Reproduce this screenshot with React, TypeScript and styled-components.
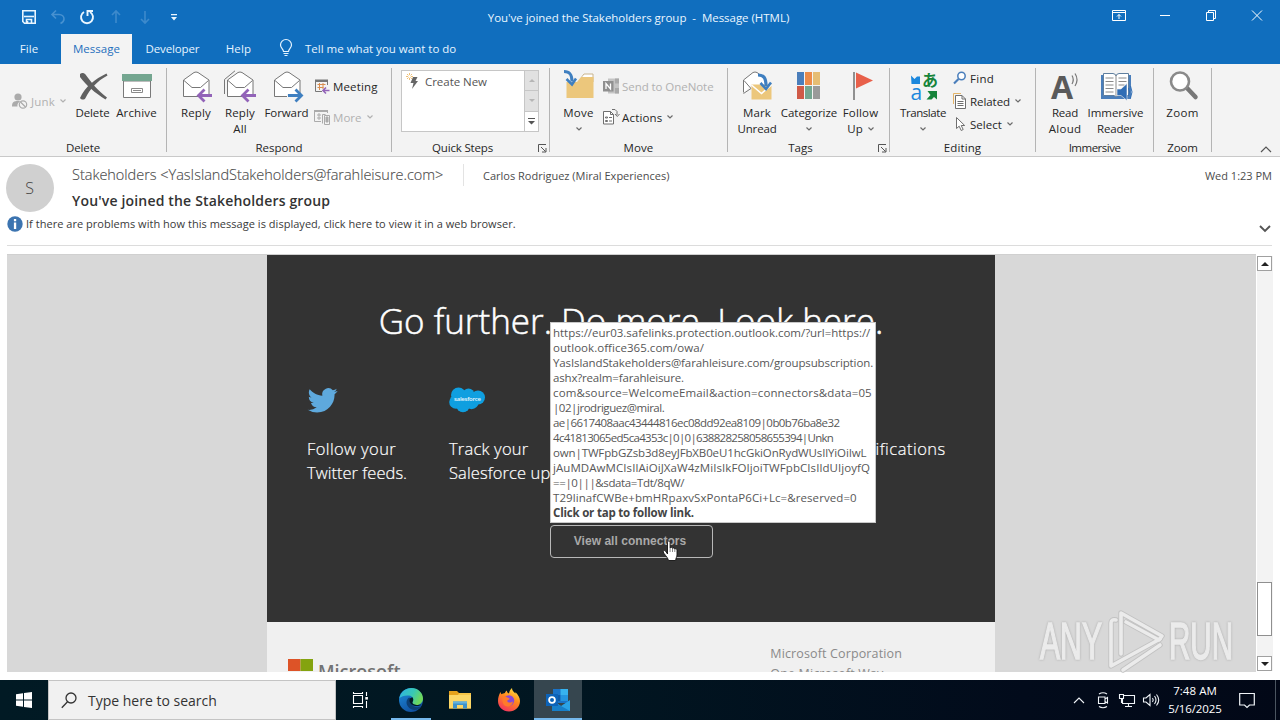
import { FC, ReactNode } from 'react';
import styled, { createGlobalStyle } from 'styled-components';

const GlobalStyle = createGlobalStyle`
  * {
    box-sizing: border-box;
  }
  body {
    margin: 0;
    overflow: hidden;
    font-family: 'Open Sans', 'Noto Sans', sans-serif;
    font-size: 11.5px;
    color: #262626;
  }
  svg {
    display: block;
    flex: none;
    overflow: visible;
  }
`;

const Window = styled.div`
  width: 1280px;
  height: 720px;
  display: flex;
  flex-direction: column;
  overflow: hidden;
  background: #fff;
`;

const Text = styled.span<{ $ls?: number }>`
  white-space: pre;
  letter-spacing: ${(p) => p.$ls ?? 0}px;
`;

/* title bar */

const TitleBar = styled.header`
  height: 34px;
  display: grid;
  grid-template-columns: 1fr auto 1fr;
  align-items: center;
  background: #106ebe;
  color: #eaf6ff;
`;

const QuickAccess = styled.div`
  display: flex;
  align-items: center;
  gap: 13px;
  padding-left: 21px;
`;

const WindowTitle = styled.div`
  padding-right: 3px;
`;

const WindowControls = styled.div`
  display: flex;
  justify-content: flex-end;
  padding-bottom: 4px;
`;

const ControlButton = styled.div`
  width: 46px;
  display: flex;
  align-items: center;
  justify-content: center;
`;

/* tabs */

const TabBar = styled.nav`
  height: 30px;
  display: flex;
  background: #106ebe;
  color: #e6f4ff;
`;

const Tab = styled.div<{ $width: number; $active?: boolean }>`
  width: ${(p) => p.$width}px;
  display: flex;
  align-items: center;
  justify-content: center;
  padding-bottom: 2px;
  background: ${(p) => (p.$active ? '#f3f3f3' : 'transparent')};
  color: ${(p) => (p.$active ? '#1f6fbd' : 'inherit')};
`;

const FileTab = styled(Tab)`
  margin-right: 3px;
`;

const TellMe = styled.div`
  display: flex;
  align-items: center;
  gap: 12px;
  margin-left: 15px;
  padding-bottom: 2px;
`;

/* ribbon */

const Ribbon = styled.section`
  height: 93px;
  display: flex;
  background: #f3f3f3;
  border-bottom: 1px solid #c9c9c9;
`;

const Group = styled.div<{ $width: number }>`
  width: ${(p) => p.$width}px;
  display: flex;
  flex-direction: column;
  border-right: 1px solid #b4b4b4;
  margin: 4px 0;
`;

const GroupBody = styled.div<{ $left: number }>`
  height: 74px;
  flex: none;
  display: flex;
  padding-left: ${(p) => p.$left}px;
`;

const GroupFooter = styled.div<{ $launcher?: boolean }>`
  height: 10px;
  display: flex;
  align-items: center;
  justify-content: center;
  padding-left: ${(p) => (p.$launcher ? 1 : 0)}px;

  svg {
    margin: 3px 2px 0 0;
  }
`;

const FooterLabel = styled(Text)<{ $launcher?: boolean }>`
  flex: ${(p) => (p.$launcher ? 1 : 'none')};
  padding-right: ${(p) => (p.$launcher ? 6 : 0)}px;
  text-align: center;
`;

const BigButton = styled.div<{ $width: number }>`
  width: ${(p) => p.$width}px;
  display: flex;
  flex-direction: column;
  align-items: center;
  padding-top: 2px;
  line-height: 16px;
`;

const IconSlot = styled.div`
  height: 35px;
`;

const ChevronLine = styled.div`
  height: 16px;
  display: flex;
  align-items: center;
  gap: 5px;
`;

const SmallColumn = styled.div<{ $left?: number; $dense?: boolean }>`
  display: flex;
  flex-direction: column;
  gap: ${(p) => (p.$dense ? 7 : 15)}px;
  margin-left: ${(p) => p.$left ?? 0}px;
  padding-top: ${(p) => (p.$dense ? 2 : 10)}px;
`;

const SmallButton = styled.div<{ $disabled?: boolean; $gap?: number }>`
  height: 16px;
  display: flex;
  align-items: center;
  gap: ${(p) => p.$gap ?? 3}px;
  color: ${(p) => (p.$disabled ? '#b1b1b1' : 'inherit')};

  svg:last-child {
    margin-left: 2px;
  }
`;

const JunkSlot = styled.div`
  width: 58px;
  padding-top: 25px;
`;

const QuickStepsBox = styled.div`
  width: 138px;
  height: 62px;
  margin-top: 2px;
  display: flex;
  background: #fff;
  border: 1px solid #c6c6c6;
`;

const QuickStep = styled.div`
  flex: 1;
  height: 21px;
  display: flex;
  align-items: center;
  gap: 5px;
  padding-left: 4px;
  color: #555;
`;

const Spinner = styled.div`
  width: 14px;
  display: flex;
  flex-direction: column;
`;

const SpinnerCell = styled.div<{ $last?: boolean }>`
  flex: 1;
  display: flex;
  align-items: center;
  justify-content: center;
  background: ${(p) => (p.$last ? '#fff' : '#e1e1e1')};
  border-left: 1px solid #c6c6c6;
  border-bottom: ${(p) => (p.$last ? 'none' : '1px solid #c6c6c6')};
`;

const CollapseRibbon = styled.div`
  margin: auto 8px 3px auto;
`;

/* message header */

const MessageHeader = styled.section`
  height: 89px;
  padding: 7px 8px 0 6px;
`;

const SenderRow = styled.div`
  height: 48px;
  display: flex;
`;

const Avatar = styled.div`
  width: 48px;
  height: 48px;
  display: flex;
  align-items: center;
  justify-content: center;
  padding-right: 1px;
  border-radius: 50%;
  background: #d0d0d0;
  color: #444;
  font-size: 16px;
  font-weight: 300;
`;

const SenderInfo = styled.div`
  flex: 1;
  margin-left: 18px;
`;

const SenderLine = styled.div`
  height: 22px;
  display: flex;
  align-items: center;
  font-size: 11px;
  color: #4c4c4c;
`;

const SenderAddress = styled(Text)`
  width: 391px;
  font-size: 14.5px;
  font-weight: 300;
  margin-top: -2px;
  -webkit-text-stroke: 0.15px #4c4c4c;
`;

const Recipient = styled.div`
  flex: 1;
  height: 22px;
  display: flex;
  align-items: center;
  padding-left: 19px;
  border-left: 1px solid #e3e3e3;
`;

const Subject = styled.div`
  padding-top: 2px;
  font-size: 14px;
  font-weight: 600;
  line-height: 26px;
  color: #333;
`;

const InfoBar = styled.div`
  height: 34px;
  display: flex;
  align-items: center;
  gap: 3px;
  padding: 0 1px 9px 0;
  margin-left: 1px;
  border-bottom: 1px solid #dcdcdc;
  font-size: 11px;
  color: #3a3a3a;

  span {
    margin-top: -2px;
  }
  svg:last-child {
    margin: 10px 0 0 auto;
  }
`;

/* reading pane */

const ReadingPane = styled.main`
  height: 434px;
  display: flex;
  margin: 0 7px;
  padding: 8px 0;
  position: relative;
`;

const MailCanvas = styled.div`
  width: 1249px;
  height: 418px;
  padding-left: 260px;
  background: #d8d8d8;
  border-top: 1px solid #d0d0d0;
  overflow: hidden;
`;

const MailBody = styled.div`
  width: 728px;
  height: 367px;
  display: flex;
  flex-direction: column;
  align-items: center;
  background: #333;
  color: #fff;
`;

const Headline = styled.h1`
  margin: 41px 0 0;
  font-size: 35px;
  font-weight: 300;
  line-height: 50px;
  -webkit-text-stroke: 0.5px #fff;
`;

const Features = styled.div`
  align-self: stretch;
  height: 179px;
  display: grid;
  grid-template-columns: 142px 400px 1fr;
  padding: 39px 0 0 40px;
`;

const Feature = styled.div`
  font-size: 16.5px;
  font-weight: 300;
  line-height: 24px;
  white-space: pre;
  -webkit-text-stroke: 0.2px #fff;
`;

const FeatureIcon = styled.div`
  height: 52px;
  padding-top: 2px;
`;

const ConnectorsButton = styled.div`
  width: 163px;
  height: 33px;
  padding: 0 2px 2px 0;
  display: flex;
  align-items: center;
  justify-content: center;
  border: 1px solid #b8b8b8;
  border-radius: 4px;
  color: #a9a9a9;
  font: bold 12px 'Liberation Sans', Arial, sans-serif;
`;

const MailFooter = styled.div`
  width: 728px;
  height: 60px;
  display: flex;
  justify-content: space-between;
  padding: 22px 93px 0 21px;
  background: #f0f0f0;
  color: #8a8a8a;
`;

const Brand = styled.div`
  display: flex;
  gap: 5px;
  padding-top: 15px;
  color: #737373;
  font-size: 18px;
  font-weight: 600;
  line-height: 24px;
`;

const Address = styled.div`
  font-size: 12.5px;
  line-height: 20px;
`;

const LinkTip = styled.div`
  position: absolute;
  left: 543px;
  top: 76px;
  width: 326px;
  height: 201px;
  padding: 2px 0 0 2px;
  display: flex;
  flex-direction: column;
  background: #fff;
  border: 1px solid #c8c8c8;
  color: #575757;
  line-height: 15px;

  strong {
    color: #444;
  }
`;

const Pointer = styled.div`
  position: absolute;
  left: 655px;
  top: 294px;
`;

const Watermark = styled.div`
  position: absolute;
  left: 1028px;
  top: 362px;
`;

const ScrollBar = styled.div`
  width: 16px;
  display: flex;
  flex-direction: column;
  margin: 2px 0 1px 1px;
  background: #f3f3f3;
`;

const ScrollArrow = styled.div`
  height: 15px;
  width: 15px;
  display: flex;
  align-items: center;
  justify-content: center;
  background: #fff;
  border: 1px solid #a0a0a0;
`;

const ScrollTrack = styled.div`
  flex: 1;
  padding-top: 311px;
`;

const ScrollThumb = styled.div`
  width: 15px;
  height: 54px;
  background: #fff;
  border: 1px solid #8f8f8f;
`;

/* taskbar */

const TaskBar = styled.footer`
  height: 40px;
  display: flex;
  align-items: center;
  background: linear-gradient(90deg, #011a24 0%, #011621 45%, #020b1b 80%, #020817 100%);
  color: #fff;
`;

const StartButton = styled.div`
  width: 48px;
  padding-left: 16px;
`;

const SearchBox = styled.div`
  width: 288px;
  height: 40px;
  display: flex;
  align-items: center;
  gap: 11px;
  padding-left: 12px;
  background: #f1f1f1;
  border: 1px solid #c4c4c4;
  color: #333;
  font-size: 14px;
`;

const TaskButtons = styled.div`
  display: flex;
  gap: 1px;
`;

const TaskButton = styled.div<{ $open?: boolean; $active?: boolean }>`
  width: 48px;
  height: 40px;
  display: flex;
  align-items: center;
  justify-content: center;
  background: ${(p) => (p.$active ? '#36464f' : 'transparent')};
  box-shadow: ${(p) => (p.$active ? 'inset 0 -2px #76b9ed' : 'none')};
  ${(p) => p.$open && 'background: linear-gradient(#76b9ed, #76b9ed) bottom / 40px 2px no-repeat;'}

  &:first-child {
    margin-right: 2px;
  }
`;

const Tray = styled.div`
  height: 40px;
  display: flex;
  align-items: center;
  margin-left: auto;
`;

const TrayIcon = styled.div`
  width: 24px;
  display: flex;
  justify-content: center;
`;

const Clock = styled.div`
  width: 64px;
  display: flex;
  flex-direction: column;
  align-items: center;
  line-height: 18px;
`;

const Notifications = styled.div`
  width: 49px;
  height: 40px;
  display: flex;
  align-items: center;
  padding-left: 12px;
  border-right: 1px solid #4b5560;
  margin-right: 4px;
`;

/* icons */

const Chevron: FC<{ color?: string }> = ({ color = '#6b6b6b' }) => (
  <svg width='6' height='4' viewBox='0 0 6 4'>
    <path d='M.5 .5 3 3 5.500 .5' fill='none' stroke={color} strokeWidth='1.200' />
  </svg>
);

const Triangle: FC<{ up?: boolean; color?: string; size?: number }> = ({ up, color = '#222', size = 8 }) => (
  <svg width={size} height={size / 2} viewBox='0 0 8 4'>
    <path d={up ? 'M0 4 4 0 8 4z' : 'M0 0 4 4 8 0z'} fill={color} />
  </svg>
);

const Launcher = () => (
  <svg width='9' height='9' viewBox='0 0 9 9' fill='none' stroke='#555'>
    <path d='M.5 8V.5H8M3 3l4.500 4.500M8 4v4H4' />
  </svg>
);

const SaveIcon = () => (
  <svg width='16' height='16' viewBox='0 0 16 16' fill='none' stroke='#eaf6ff' strokeWidth='1.600'>
    <path d='M1.800 1.800h12.400v12.400H3.500L1.800 12.500z' />
    <path d='M3 7.500h10' />
    <path d='M5.500 14.500v-4h5v4' />
    <path d='M6.500 12v2' />
  </svg>
);

const UndoIcon = () => (
  <svg width='16' height='16' viewBox='0 0 16 16' fill='none' stroke='#4791d0' strokeWidth='1.600'>
    <path d='M6 1.500 2 5.500l4 4M2 5.500h7c3 0 5 2 5 4.500s-1.500 3.500-3.500 4.500' />
  </svg>
);

const RepeatIcon = () => (
  <svg width='16' height='16' viewBox='0 0 16 16' fill='none' stroke='#eaf6ff' strokeWidth='1.900'>
    <path d='M5 3A6 6 0 1 0 11 3' />
    <path d='M8.500 7V2H14' />
  </svg>
);

const ArrowIcon: FC<{ down?: boolean }> = ({ down }) => (
  <svg width='16' height='16' viewBox='0 0 16 16' fill='none' stroke='#3d8acc' strokeWidth='1.600'>
    <path d={down ? 'M8 2v12M4 10l4 4 4-4' : 'M8 14V2M4 6l4-4 4 4'} />
  </svg>
);

const CustomizeIcon = () => (
  <svg width='16' height='16' viewBox='0 0 16 16' fill='#eaf6ff'>
    <path d='M5 5h6v1.300H5zM5 8h6l-3 3.500z' />
  </svg>
);

const BulbIcon = () => (
  <svg width='14' height='18' viewBox='0 0 14 18' fill='none' stroke='#e6f4ff' strokeWidth='1.200'>
    <path d='M4.500 12.500C4.500 10 1.500 9 1.500 6a5.500 5.500 0 0 1 11 0c0 3-3 4-3 6.500zM4.500 14.500h5M5.500 16.500h3' />
  </svg>
);

const RibbonDisplayIcon = () => (
  <svg width='14' height='11' viewBox='0 0 14 11' fill='none' stroke='#fff'>
    <path d='M.5 .5h13v10H.5zM.5 2.500h13M7 9V4.500M5 6.500l2-2 2 2' />
  </svg>
);

const JunkIcon = () => (
  <svg width='16' height='16' viewBox='0 0 16 16'>
    <circle cx='6' cy='4' r='3.600' fill='#ababab' />
    <path d='M0 13c0-4 2-5 6-5 1 0 2 0 2 .5-2 1-3 3-2.500 5H0z' fill='#ababab' />
    <circle cx='11' cy='11.500' r='3.700' fill='#f3f3f3' stroke='#ababab' strokeWidth='1.200' />
    <path d='m8.500 9 5 5' stroke='#ababab' strokeWidth='1.200' />
  </svg>
);

const DeleteIcon = () => (
  <svg width='32' height='32' viewBox='0 0 32 32' fill='#606060'>
    <path d='M3 4c2-1.500 4-1 5.500 .5 6 8 12 16 21.500 23L28.500 29.500C18 23 9 15 3 7z' />
    <path d='M29.500 3.500 30.500 5.500C20 11 13 19 8.500 28c-1 2-4 2-5.500 0C8 17 18 9 29.500 3.500z' />
  </svg>
);

const ArchiveIcon = () => (
  <svg width='32' height='32' viewBox='0 0 32 32'>
    <path d='M2.500 11h27v16.500h-27z' fill='#fff' stroke='#7a7a7a' />
    <path d='M1 4h30v7H1z' fill='#74a690' />
    <path d='M10.500 18.500h11v4h-11zM12 20.500h8' fill='#fff' stroke='#8a8a8a' />
  </svg>
);

const EnvelopeIcon: FC<{ kind: 'reply' | 'replyAll' | 'forward' }> = ({ kind }) => (
  <svg width='32' height='34' viewBox='0 0 32 34' fill='none'>
    {kind === 'replyAll' && <path d='M.5 24V9.500L11 .8' stroke='#777' />}
    <path d='M3.500 26.500V10L14 2.500q2-1 4 0L29 10v16.500z' fill='#fff' stroke='#777' />
    <path d='m4 10.500 8 7h8.500l8-7' stroke='#777' />
    {kind === 'forward' ? (
      <g>
        <path d='M16 24h13.500v6H16z' fill='#f3f3f3' />
        <path d='M17 25.500h13M24.500 19.500l6 6-6 6' stroke='#3f7fc0' strokeWidth='2.800' />
      </g>
    ) : (
      <g>
        <path d='M20 24h12v6H20z' fill='#f3f3f3' />
        <path d='M32 25.500H19M24.500 19.500l-6 6 6 6' stroke='#9263b8' strokeWidth='2.800' />
      </g>
    )}
  </svg>
);

const MeetingIcon = () => (
  <svg width='16' height='16' viewBox='0 0 16 16' fill='none'>
    <path d='M1.500 3v10.500H8M13.500 3v4' stroke='#777' />
    <path d='M1 1.500h13V4H1z' fill='#777' />
    <path d='M3.500 6.500h8M3.500 9.500h6M5.500 5v7M9 5v6' stroke='#d98e50' />
    <path d='M15.500 12.500H9.500M12 9.500l-3 3 3 3' stroke='#9263b8' strokeWidth='1.600' />
  </svg>
);

const MoreIcon = () => (
  <svg width='16' height='16' viewBox='0 0 16 16' fill='none' stroke='#ababab'>
    <path d='M.5 2v10.500H7M13.500 2v2' />
    <path d='M0 2h14' strokeWidth='2' />
    <path d='M3 6h4M3 9h4M5 4v7M8.500 14.500v-9h3M10.500 6.500h5v9h-5z' />
    <path d='M12 8h2v5h-2z' fill='#ababab' />
  </svg>
);

const BoltIcon = () => (
  <svg width='14' height='18' viewBox='0 0 14 18'>
    <path d='M3.500 0v7M0 3.500h7M1 1l5 5M6 1 1 6' stroke='#edb968' strokeWidth='.9' />
    <circle cx='3.500' cy='3.500' r='1.400' fill='#fff' />
    <path d='M7 4h4.500L9.500 8H12l-6 8 1.500-6H4.500z' fill='#666' />
  </svg>
);

const MoveIcon = () => (
  <svg width='32' height='32' viewBox='0 0 32 32'>
    <path d='M19 6.500 21 4h9v8h-11z' fill='#fff' stroke='#c9b48c' />
    <path d='M3.500 28V12H14l4-5h12.500v21z' fill='#ecc77c' />
    <path d='M1 1.500c6 0 8 3 8 10' fill='none' stroke='#3f7fc0' strokeWidth='3' />
    <path d='m3.500 9 5.500 5.500 4-6' fill='none' stroke='#3f7fc0' strokeWidth='2.500' />
  </svg>
);

const OneNoteIcon = () => (
  <svg width='16' height='16' viewBox='0 0 16 16'>
    <path d='M5 .5h11v15H5z' fill='#c4c4c4' />
    <path d='M12 .5h4v5h-4zM12 10h4v5.500h-4z' fill='#a9a9a9' />
    <path d='M0 3h10.500v10.500H0z' fill='#8f8f8f' />
    <path d='M3 11V5.500l4.500 5.500V5.500' fill='none' stroke='#fff' strokeWidth='1.300' />
  </svg>
);

const ActionsIcon = () => (
  <svg width='17' height='16' viewBox='0 0 17 16' fill='none' stroke='#6f6f6f'>
    <path d='M.5 2.500h7l3 3v9.500H.5z' fill='#fff' />
    <path d='M7.500 2.500v3h3' />
    <path d='M2.500 8h2v1h-2zM6 8.500h3M2.500 11.500h2v1h-2zM6 12h3' />
    <path d='M9 .5h3l2 2v3.500M12 5l2.300 2.500L16.500 5' />
  </svg>
);

const MarkUnreadIcon = () => (
  <svg width='32' height='32' viewBox='0 0 32 32' fill='none'>
    <path d='M2.500 22V10L12 2.500q2-1 4 0L25 10v5H10l-7.500 8z' fill='#fff' />
    <path d='M2.500 22.500V10L12 2.500q2-1 4 0l6 4.500M3 10.500l7 8-7.500 5' stroke='#777' />
    <path d='M10.500 14.500h20v15h-20z' fill='#ecc77c' />
    <path d='m10.500 15 10 8.500 10-8.500' stroke='#fff' strokeWidth='1.600' />
    <path d='M17 5c6 0 8 3 8 11' stroke='#3f7fc0' strokeWidth='3.200' />
    <path d='m19.500 13 5.500 6 5-6.500' stroke='#3f7fc0' strokeWidth='2.600' />
  </svg>
);

const CategorizeIcon = () => (
  <svg width='32' height='32' viewBox='0 0 32 32'>
    <path d='M4 2h7v13H4z' fill='#4a7ebb' />
    <path d='M12 2h7v13h-7z' fill='#ec8b49' />
    <path d='M20 2h7v13h-7z' fill='#e6bd73' />
    <path d='M4 16h7v13H4z' fill='#cf5a47' />
    <path d='M12 16h7v13h-7z' fill='#74a690' />
    <path d='M20 16h7v13h-7z' fill='#9a9a9a' />
  </svg>
);

const FlagIcon = () => (
  <svg width='32' height='32' viewBox='0 0 32 32'>
    <path d='M9 2v28' stroke='#777' strokeWidth='1.600' />
    <path d='M11 2.500 28 10.500l-17 8z' fill='#e8604a' />
  </svg>
);

const TranslateIcon = () => (
  <svg width='32' height='32' viewBox='0 0 32 32'>
    <path d='M4 5.500 7.500 9 10 6.500h3V14H4.500z' fill='#1b87dd' />
    <path d='M20.500 21H30v8.500l-3-2.500-2.500 2.500h-5l4-4.500z' fill='#16843a' />
    <text x='15' y='15.500' fontSize='16' fontWeight='700' fontFamily='"Noto Sans CJK JP", sans-serif' fill='#16843a'>
      あ
    </text>
    <text x='3.500' y='29.500' fontSize='21' fontFamily='"Open Sans", sans-serif' fill='#1b87dd'>
      a
    </text>
  </svg>
);

const FindIcon = () => (
  <svg width='14' height='14' viewBox='0 0 14 14' fill='none' stroke='#4a7ebb'>
    <circle cx='8.500' cy='5' r='3.700' fill='#fff' strokeWidth='1.500' />
    <path d='M5.500 8 1 12.500' strokeWidth='2.200' />
  </svg>
);

const RelatedIcon = () => (
  <svg width='14' height='16' viewBox='0 0 14 16' fill='none'>
    <path d='M.5 11V.5H8' stroke='#e4b468' />
    <path d='M2.500 2.500h6.500l3.500 3.500v9.500h-10z' fill='#fff' stroke='#6f6f6f' />
    <path d='M9 2.500V6h3.500M4.500 8.500h6M4.500 10.500h6M4.500 12.500h6' stroke='#6f6f6f' />
  </svg>
);

const SelectIcon = () => (
  <svg width='14' height='16' viewBox='0 0 14 16'>
    <path d='M3.500 1.500v11l2.700-2.300 2 4.300 2-1-2-4h3.500z' fill='#fff' stroke='#6f6f6f' />
  </svg>
);

const ReadAloudIcon = () => (
  <svg width='32' height='32' viewBox='0 0 32 32' fill='none'>
    <text x='2' y='29' fontSize='32' fontWeight='700' fontFamily='"Open Sans", sans-serif' fill='#5a5a5a'>
      A
    </text>
    <path d='M23 5.500q2.500 4 0 8.500M26 3.500q4 6 0 12.500' stroke='#777' strokeWidth='1.200' />
  </svg>
);

const ReaderIcon = () => (
  <svg width='32' height='32' viewBox='0 0 32 32' fill='none'>
    <path d='M1 5h30v24H1z' fill='#4a7ebb' />
    <path d='M3.500 3.500h9.500q3 .5 3 2.500 0-2 3-2.500h9.500v22H18l-2 1.500-2-1.500H3.500z' fill='#fff' stroke='#5f7f9f' />
    <path d='M16 5v21M5.500 8h8M5.500 11.500h8M5.500 15h8M5.500 18.500h8M5.500 22h8M18.500 8h8M18.500 11.500h8M18.500 15h6' stroke='#8a8a8a' />
    <path d='M17 19h4l6-5.500v17L21 25.500h-4z' fill='#2f6db5' stroke='#f3f3f3' strokeWidth='.6' />
    <path d='M28.500 18q2 4 0 8M30.500 16q3 6 0 12' stroke='#2f6db5' />
  </svg>
);

const ZoomIcon = () => (
  <svg width='32' height='32' viewBox='0 0 32 32' fill='none'>
    <path d='m20 18 8.500 9' stroke='#777' strokeWidth='4.500' strokeLinecap='round' />
    <circle cx='13' cy='11.500' r='9' fill='#fff' stroke='#8a8a8a' strokeWidth='2.600' />
  </svg>
);

const InfoIcon = () => (
  <svg width='16' height='16' viewBox='0 0 16 16'>
    <circle cx='8' cy='8' r='7.700' fill='#3c74b0' />
    <path d='M6.900 6.500h2.300V13H6.900zM6.900 3h2.300v2.200H6.900z' fill='#fff' />
  </svg>
);

const TwitterIcon = () => (
  <svg width='30' height='28' viewBox='-.5 1.500 24 22'>
    <path
      fill='#5ea9dd'
      d='M23.950 4.570a10 10 0 0 1-2.820.77 4.960 4.960 0 0 0 2.160-2.720c-.95.55-2 .95-3.130 1.180a4.920 4.920 0 0 0-8.380 4.480C7.690 8.100 4.070 6.130 1.640 3.160a4.820 4.820 0 0 0-.67 2.480c0 1.710.87 3.210 2.190 4.100a4.900 4.900 0 0 1-2.230-.62v.06a4.920 4.920 0 0 0 3.950 4.830 5 5 0 0 1-2.210.08 4.940 4.940 0 0 0 4.600 3.420A9.870 9.870 0 0 1 0 19.540a13.990 13.990 0 0 0 7.560 2.210c9.050 0 14-7.500 14-13.980 0-.21 0-.42-.02-.63a9.940 9.940 0 0 0 2.460-2.550z'
    />
  </svg>
);

const SalesforceIcon = () => (
  <svg width='36' height='26' viewBox='0 0 36 26'>
    <g fill='#0f9fe0'>
      <circle cx='9.500' cy='8' r='7.500' />
      <circle cx='7' cy='15' r='6.800' />
      <circle cx='14' cy='18.500' r='6.800' />
      <circle cx='19.500' cy='7.500' r='6' />
      <circle cx='22.500' cy='15' r='7.200' />
      <circle cx='29' cy='10.500' r='7' />
    </g>
    <text
      x='5'
      y='14'
      fontSize='6'
      fontWeight='600'
      textLength='27'
      stroke='none'
      fontFamily='"Open Sans", sans-serif'
      fill='#e8f7ff'
    >
      salesforce
    </text>
  </svg>
);

const HandIcon = () => (
  <svg width='17' height='22' viewBox='0 0 17 22'>
    <path
      d='M5.500 14V2.200c0-1.800 2.600-1.800 2.600 0V8c.5-1 2.300-.8 2.400.4.600-.8 2.200-.5 2.300.7.700-.7 2.200-.3 2.200 1V15c0 2-1.300 3-1.300 5.500H6.500C6 17.500 1.500 13.500 1.200 12c-.3-1.400 1.300-2 2.300-1z'
      fill='#fff'
      stroke='#111'
      strokeWidth='.9'
    />
    <path d='M8.100 8v4M10.500 8.500V12M12.800 9.200V12' stroke='#555' strokeWidth='.7' />
  </svg>
);

const MicrosoftMark = () => (
  <svg width='25' height='25' viewBox='0 0 25 25'>
    <path d='M0 0h12.500v12H0z' fill='#dd5327' />
    <path d='M12.500 0H25v12H12.500z' fill='#84a30f' />
    <path d='M0 13h12v12H0z' fill='#1ba1e2' />
    <path d='M13 13h12v12H13z' fill='#f3b61b' />
  </svg>
);

const AnyRunLogo = () => (
  <svg width='206' height='66' viewBox='0 0 206 66' fill='none'>
    <g
      fontFamily='"Liberation Sans Narrow", "Liberation Sans", sans-serif'
      fontSize='52'
      fill='#ebebeb'
      stroke='#ebebeb'
      strokeWidth='1.600'
      filter='drop-shadow(0 0 1px #aaa)'
    >
      <text x='5' y='51' textLength='62' lengthAdjust='spacingAndGlyphs'>
        ANY
      </text>
      <text x='134' y='51' textLength='64' lengthAdjust='spacingAndGlyphs'>
        RUN
      </text>
    </g>
    {['#c2c2c2', '#ebebeb'].map((color, i) => (
      <g key={color} stroke={color} strokeWidth={i ? 3.600 : 5.400} strokeLinecap='round' strokeLinejoin='round'>
        <path d='M81 12q-5-1-5 3v43l49-27' />
        <path d='M86 46V5l41 23-3 4L91 14' />
        <path d='m88 62 37-25' />
      </g>
    ))}
  </svg>
);

const WindowsIcon = () => (
  <svg width='16' height='16' viewBox='0 0 16 16' fill='#fff'>
    <path d='M0 2.300 7 1.300v6.200H0zM8 1.100 16 0v7.500H8zM0 8.500h7v6.200l-7-1zM8 8.500h8V16l-8-1.100z' />
  </svg>
);

const SearchIcon = () => (
  <svg width='16' height='17' viewBox='0 0 16 17' fill='none' stroke='#333' strokeWidth='1.300'>
    <circle cx='10' cy='6' r='5' />
    <path d='M6.500 9.700.8 15.800' />
  </svg>
);

const TaskViewIcon = () => (
  <svg width='18' height='16' viewBox='0 0 18 16' fill='none' stroke='#fff' strokeWidth='1.100'>
    <path d='M2.500 3.500h9v8h-9zM2.500 0v1.500h9V0M2.500 16v-1.500h9V16M15.500 0v4M15.500 9v7' />
    <path d='M14.300 5h2.600v2.600h-2.600z' fill='#fff' stroke='none' />
  </svg>
);

const EdgeIcon = () => (
  <svg width='24' height='24' viewBox='0 0 24 24'>
    <defs>
      <linearGradient id='edgeTop' x1='0' y1='0' x2='1' y2='.4'>
        <stop offset='0' stopColor='#2fb2e6' />
        <stop offset='.6' stopColor='#38c8b4' />
        <stop offset='1' stopColor='#6fd85a' />
      </linearGradient>
      <linearGradient id='edgeSide' x1='0' y1='0' x2='.6' y2='1'>
        <stop offset='0' stopColor='#1e8fdc' />
        <stop offset='1' stopColor='#104f9f' />
      </linearGradient>
    </defs>
    <circle cx='12' cy='12' r='12' fill='url(#edgeSide)' />
    <path
      d='M.3 10C2 3.500 7 0 12.500 0 19 0 24 5 24 10.500c0 4-3 6.500-6.500 6.500-3 0-5-1.200-4-3 1.500-2.500.5-6-3.500-6.500C6 7 2 8.500.3 10z'
      fill='url(#edgeTop)'
    />
    <path d='M10 9.500c-4 3-3 9 2 11.500 4 2 8 .5 10-2.500-4 1.500-8.500.500-9.500-3-.7-2 1-3-.2-5z' fill='#0d3f73' />
    <path
      d='M13.500 14c1-1.500 1-3 .2-4.500-1.200 0-3 .6-3.200 2.500-.2 2.500 1.500 4.500 4 5.500 3 1 6.500.5 8-1-3 1-10 .500-9-2.500z'
      fill='#011a24'
    />
  </svg>
);

const ExplorerIcon = () => (
  <svg width='22' height='20' viewBox='0 0 22 20'>
    <path d='M0 1h8l2 2h12v15.500H0z' fill='#e5a21c' />
    <path d='M0 5h22v13.500H0z' fill='#fcd766' />
    <path d='M10 3h12v2H9z' fill='#f6c547' />
    <path d='M4 18.500V11.500h14v7h-4v-3.500H8v3.500z' fill='#3f93c9' />
    <path d='M4 11.500h14v2H4z' fill='#64b2dd' />
  </svg>
);

const FirefoxIcon = () => (
  <svg width='24' height='24' viewBox='0 0 24 24'>
    <defs>
      <linearGradient id='fox' x1='.8' y1='0' x2='.3' y2='1'>
        <stop offset='0' stopColor='#ffe645' />
        <stop offset='.45' stopColor='#ff8a1d' />
        <stop offset='1' stopColor='#f4335f' />
      </linearGradient>
    </defs>
    <path
      d='M3.500 4c.2 1 .5 1.700 1 2.300C5.500 5.500 7 5.500 8 5c.2-1 1-2 2-2.500-.2 1.500.5 2.500 2 3 .3-2 1.200-4 3-5.500 0 2.500 1.500 3.500 3.500 5.500 0-.5 0-1-.2-1.500C21 6.500 23 9.500 23 13c0 6-5 10.500-11 10.500S1 19 1 13c0-3.500 1-6.500 2.500-9z'
      fill='url(#fox)'
    />
    <circle cx='12' cy='12.500' r='5.200' fill='#8748d8' />
    <path
      d='M5.500 9c2-1 4-.5 6 1 1.500 0 1.500 1.500-.5 2-1 .3-1 2 1 2.500 1.500.3 3-.5 4-1-.5 3-2.500 5-5.500 5s-5-3-5-5.500z'
      fill='#ff7a2a'
    />
  </svg>
);

const OutlookIcon = () => (
  <svg width='24' height='24' viewBox='0 0 24 24'>
    <path d='M7 1h15v14H7z' fill='#1a73c8' />
    <path d='M14.500 1H22v6h-7.500z' fill='#37b3ef' />
    <path d='M7 7h7.500v6H7z' fill='#0f5aa7' />
    <path d='M14.500 7H22v6h-7.500z' fill='#2495e0' />
    <path d='M6 12l9 6 9-6v11H6z' fill='#2aa3e6' />
    <path d='M6 13v10h18z' fill='#177fc9' />
    <path d='M0 6h12v12H0z' fill='#0d63b8' />
    <circle cx='6' cy='12' r='2.900' fill='none' stroke='#fff' strokeWidth='1.800' />
  </svg>
);

const TrayGlyph: FC<{ children: ReactNode }> = ({ children }) => (
  <svg width='18' height='18' viewBox='0 0 18 18' fill='none' stroke='#f0f4f8' strokeWidth='1.100'>
    {children}
  </svg>
);

const GroupLabel: FC<{ label: string; ls: number; launcher?: boolean }> = ({ label, ls, launcher }) => (
  <GroupFooter $launcher={launcher}>
    <FooterLabel $ls={ls} $launcher={launcher}>
      {label}
    </FooterLabel>
    {launcher && <Launcher />}
  </GroupFooter>
);

type Line = [string, number];

const Big: FC<{ icon: ReactNode; width: number; lines: Line[]; below?: boolean }> = ({ icon, width, lines, below }) => (
  <BigButton $width={width}>
    <IconSlot>{icon}</IconSlot>
    {lines.map(([text, ls]) => (
      <Text key={text} $ls={ls}>
        {text}
      </Text>
    ))}
    {below && (
      <ChevronLine>
        <Chevron />
      </ChevronLine>
    )}
  </BigButton>
);

const tipLines: Line[] = [
  ['https://eur03.safelinks.protection.outlook.com/?url=https://', -0.02],
  ['outlook.office365.com/owa/', 0.04],
  ['YasIslandStakeholders@farahleisure.com/groupsubscription.', -0.11],
  ['ashx?realm=farahleisure.', -0.17],
  ['com&source=WelcomeEmail&action=connectors&data=05', 0.13],
  ['|02|jrodriguez@miral.', -0.46],
  ['ae|6617408aac43444816ec08dd92ea8109|0b0b76ba8e32', -0.57],
  ['4c41813065ed5ca4353c|0|0|638828258058655394|Unkn', -0.7],
  ['own|TWFpbGZsb3d8eyJFbXB0eU1hcGkiOnRydWUsIlYiOiIwL', -0.13],
  ['jAuMDAwMCIsIlAiOiJXaW4zMiIsIkFOIjoiTWFpbCIsIldUIjoyfQ', 0.07],
  ['==|0|||&sdata=Tdt/8qW/', -0.38],
  ['T29linafCWBe+bmHRpaxvSxPontaP6Ci+Lc=&reserved=0', 0.08],
];

const App: FC = () => (
  <Window>
    <GlobalStyle />
    <TitleBar>
      <QuickAccess>
        <SaveIcon />
        <UndoIcon />
        <RepeatIcon />
        <ArrowIcon />
        <ArrowIcon down />
        <CustomizeIcon />
      </QuickAccess>
      <WindowTitle>
        <Text $ls={-0.03}>{"You've joined the Stakeholders group  -  Message (HTML)"}</Text>
      </WindowTitle>
      <WindowControls>
        <ControlButton>
          <RibbonDisplayIcon />
        </ControlButton>
        <ControlButton>
          <svg width='10' height='11' viewBox='0 0 10 11'>
            <path d='M0 5.500h10' stroke='#fff' />
          </svg>
        </ControlButton>
        <ControlButton>
          <svg width='10' height='11' viewBox='0 0 10 11' fill='none' stroke='#fff'>
            <path d='M.5 2.500h7v8h-7zM2.500 2.500v-2h7v8h-2' />
          </svg>
        </ControlButton>
        <ControlButton>
          <svg width='10' height='11' viewBox='0 0 10 11'>
            <path d='m0 .5 10 10M10 .5l-10 10' stroke='#fff' />
          </svg>
        </ControlButton>
      </WindowControls>
    </TitleBar>

    <TabBar>
      <FileTab $width={58}>
        <Text $ls={0.1}>File</Text>
      </FileTab>
      <Tab $width={71} $active>
        <Text $ls={0.02}>Message</Text>
      </Tab>
      <Tab $width={81}>
        <Text $ls={-0.12}>Developer</Text>
      </Tab>
      <Tab $width={51}>
        <Text $ls={0.2}>Help</Text>
      </Tab>
      <TellMe>
        <BulbIcon />
        <Text>Tell me what you want to do</Text>
      </TellMe>
    </TabBar>

    <Ribbon>
      <Group $width={167}>
        <GroupBody $left={12}>
          <JunkSlot>
            <SmallButton $disabled>
              <JunkIcon />
              <Text $ls={0.19}>Junk</Text>
              <Chevron color='#b1b1b1' />
            </SmallButton>
          </JunkSlot>
          <Big icon={<DeleteIcon />} width={45} lines={[['Delete', -0.12]]} />
          <Big icon={<ArchiveIcon />} width={43} lines={[['Archive', 0.15]]} />
        </GroupBody>
        <GroupLabel label='Delete' ls={-0.12} />
      </Group>
      <Group $width={225}>
        <GroupBody $left={7}>
          <Big icon={<EnvelopeIcon kind='reply' />} width={44} lines={[['Reply', 0.1]]} />
          <Big icon={<EnvelopeIcon kind='replyAll' />} width={44} lines={[['Reply', 0.1], ['All', 0.1]]} />
          <Big icon={<EnvelopeIcon kind='forward' />} width={49} lines={[['Forward', -0.09]]} />
          <SmallColumn $left={3}>
            <SmallButton>
              <MeetingIcon />
              <Text $ls={0.15}>Meeting</Text>
            </SmallButton>
            <SmallButton $disabled>
              <MoreIcon />
              <Text $ls={0.05}>More</Text>
              <Chevron color='#b1b1b1' />
            </SmallButton>
          </SmallColumn>
        </GroupBody>
        <GroupLabel label='Respond' ls={-0.01} />
      </Group>
      <Group $width={158}>
        <GroupBody $left={9}>
          <QuickStepsBox>
            <QuickStep>
              <BoltIcon />
              <Text $ls={-0.04}>Create New</Text>
            </QuickStep>
            <Spinner>
              <SpinnerCell>
                <Triangle up color='#b5b5b5' size={6} />
              </SpinnerCell>
              <SpinnerCell>
                <Triangle color='#b5b5b5' size={6} />
              </SpinnerCell>
              <SpinnerCell $last>
                <svg width='7' height='7' viewBox='0 0 7 7' fill='#555'>
                  <path d='M0 0h7v1H0zM0 3h7L3.500 6.500z' />
                </svg>
              </SpinnerCell>
            </Spinner>
          </QuickStepsBox>
        </GroupBody>
        <GroupLabel label='Quick Steps' ls={-0.17} launcher />
      </Group>
      <Group $width={178}>
        <GroupBody $left={6}>
          <Big icon={<MoveIcon />} width={45} lines={[['Move', 0.3]]} below />
          <SmallColumn $left={2}>
            <SmallButton $disabled>
              <OneNoteIcon />
              <Text $ls={-0.06}>Send to OneNote</Text>
            </SmallButton>
            <SmallButton $gap={2}>
              <ActionsIcon />
              <Text $ls={0.18}>Actions</Text>
              <Chevron />
            </SmallButton>
          </SmallColumn>
        </GroupBody>
        <GroupLabel label='Move' ls={0.1} />
      </Group>
      <Group $width={162}>
        <GroupBody $left={3}>
          <Big icon={<MarkUnreadIcon />} width={52} lines={[['Mark', 0.13], ['Unread', -0.17]]} />
          <Big icon={<CategorizeIcon />} width={52} lines={[['Categorize', -0.02]]} below />
          <BigButton $width={51}>
            <IconSlot>
              <FlagIcon />
            </IconSlot>
            <Text $ls={0.2}>Follow</Text>
            <ChevronLine>
              <Text>Up</Text>
              <Chevron />
            </ChevronLine>
          </BigButton>
        </GroupBody>
        <GroupLabel label='Tags' ls={0.05} launcher />
      </Group>
      <Group $width={146}>
        <GroupBody $left={6}>
          <Big icon={<TranslateIcon />} width={54} lines={[['Translate', -0.42]]} below />
          <SmallColumn $left={3} $dense>
            <SmallButton>
              <FindIcon />
              <Text $ls={0.27}>Find</Text>
            </SmallButton>
            <SmallButton>
              <RelatedIcon />
              <Text $ls={-0.06}>Related</Text>
              <Chevron />
            </SmallButton>
            <SmallButton>
              <SelectIcon />
              <Text $ls={0.04}>Select</Text>
              <Chevron />
            </SmallButton>
          </SmallColumn>
        </GroupBody>
        <GroupLabel label='Editing' ls={0.1} />
      </Group>
      <Group $width={118}>
        <GroupBody $left={7}>
          <Big icon={<ReadAloudIcon />} width={44} lines={[['Read', -0.25], ['Aloud', 0.3]]} />
          <Big icon={<ReaderIcon />} width={57} lines={[['Immersive', -0.05], ['Reader', -0.19]]} />
        </GroupBody>
        <GroupLabel label='Immersive' ls={-0.5} />
      </Group>
      <Group $width={58}>
        <GroupBody $left={6}>
          <Big icon={<ZoomIcon />} width={45} lines={[['Zoom', 0.4]]} />
        </GroupBody>
        <GroupLabel label='Zoom' ls={-0.1} />
      </Group>
      <CollapseRibbon>
        <svg width='12' height='7' viewBox='0 0 12 7' fill='none' stroke='#555' strokeWidth='1.200'>
          <path d='m1 6 5-5 5 5' />
        </svg>
      </CollapseRibbon>
    </Ribbon>

    <MessageHeader>
      <SenderRow>
        <Avatar>S</Avatar>
        <SenderInfo>
          <SenderLine>
            <SenderAddress $ls={-0.02}>{'Stakeholders <YasIslandStakeholders@farahleisure.com>'}</SenderAddress>
            <Recipient>
              <Text>Carlos Rodriguez (Miral Experiences)</Text>
            </Recipient>
            <Text>Wed 1:23 PM</Text>
          </SenderLine>
          <Subject>
            <Text $ls={0.17}>{"You've joined the Stakeholders group"}</Text>
          </Subject>
        </SenderInfo>
      </SenderRow>
      <InfoBar>
        <InfoIcon />
        <Text $ls={0.03}>
          If there are problems with how this message is displayed, click here to view it in a web browser.
        </Text>
        <svg width='12' height='8' viewBox='0 0 12 8' fill='none' stroke='#555' strokeWidth='1.900'>
          <path d='m1 1 5 5 5-5' />
        </svg>
      </InfoBar>
    </MessageHeader>

    <ReadingPane>
      <MailCanvas>
        <MailBody>
          <Headline>Go further. Do more. Look here.</Headline>
          <Features>
            <Feature>
              <FeatureIcon>
                <TwitterIcon />
              </FeatureIcon>
              <Text $ls={0.4}>Follow your</Text>
              <br />
              <Text $ls={0.03}>Twitter feeds.</Text>
            </Feature>
            <Feature>
              <FeatureIcon>
                <SalesforceIcon />
              </FeatureIcon>
              <Text $ls={0.2}>Track your</Text>
              <br />
              <Text $ls={0.1}>Salesforce up</Text>
            </Feature>
            <Feature>
              <FeatureIcon />
              <Text $ls={0.5}>notifications</Text>
            </Feature>
          </Features>
          <ConnectorsButton>
            <Text $ls={0.03}>View all connectors</Text>
          </ConnectorsButton>
        </MailBody>
        <MailFooter>
          <Brand>
            <MicrosoftMark />
            <Text>Microsoft</Text>
          </Brand>
          <Address>
            <Text $ls={0.13}>Microsoft Corporation</Text>
            <br />
            <Text $ls={0.13}>One Microsoft Way</Text>
          </Address>
        </MailFooter>
      </MailCanvas>
      <ScrollBar>
        <ScrollArrow>
          <Triangle up />
        </ScrollArrow>
        <ScrollTrack>
          <ScrollThumb />
        </ScrollTrack>
        <ScrollArrow>
          <Triangle />
        </ScrollArrow>
      </ScrollBar>
      <LinkTip>
        {tipLines.map(([text, ls]) => (
          <Text key={text} $ls={ls}>
            {text}
          </Text>
        ))}
        <strong>
          <Text $ls={-0.2}>Click or tap to follow link.</Text>
        </strong>
      </LinkTip>
      <Pointer>
        <HandIcon />
      </Pointer>
      <Watermark>
        <AnyRunLogo />
      </Watermark>
    </ReadingPane>

    <TaskBar>
      <StartButton>
        <WindowsIcon />
      </StartButton>
      <SearchBox>
        <SearchIcon />
        <Text>Type here to search</Text>
      </SearchBox>
      <TaskButtons>
        <TaskButton>
          <TaskViewIcon />
        </TaskButton>
        <TaskButton $open>
          <EdgeIcon />
        </TaskButton>
        <TaskButton>
          <ExplorerIcon />
        </TaskButton>
        <TaskButton>
          <FirefoxIcon />
        </TaskButton>
        <TaskButton $active>
          <OutlookIcon />
        </TaskButton>
      </TaskButtons>
      <Tray>
        <TrayIcon>
          <TrayGlyph>
            <path d='m4 12 5-5 5 5' />
          </TrayGlyph>
        </TrayIcon>
        <TrayIcon>
          <TrayGlyph>
            <path d='M4.500 6h6.500v6.500H4.500zM11 8l2.500-1.500v5.500L11 10.500M5 3q4-2.500 8 0M5 15.500q4 2.500 8 0' />
          </TrayGlyph>
        </TrayIcon>
        <TrayIcon>
          <TrayGlyph>
            <path d='M6 4.500h10.500v8H4.500V8M10.500 12.500v3M7 15.500h7M1.500 3.500h4v4h-4zM3.500 7.500V12' />
          </TrayGlyph>
        </TrayIcon>
        <TrayIcon>
          <TrayGlyph>
            <path d='M1.500 7h2.500l4-3.500v11L4 11H1.500zM10.500 7q1.500 2 0 4M12.500 5q3 4 0 8M14.500 3.500q4.500 5.500 0 11' />
          </TrayGlyph>
        </TrayIcon>
        <Clock>
          <Text $ls={0.05}>7:48 AM</Text>
          <Text $ls={-0.12}>5/16/2025</Text>
        </Clock>
        <Notifications>
          <svg width='16' height='17' viewBox='0 0 16 17' fill='none' stroke='#f0f4f8' strokeWidth='1.200'>
            <path d='M.7 1.500h14.600V13h-4.800L8 15.500 5.500 13H.7z' />
          </svg>
        </Notifications>
      </Tray>
    </TaskBar>
  </Window>
);

export default App;
